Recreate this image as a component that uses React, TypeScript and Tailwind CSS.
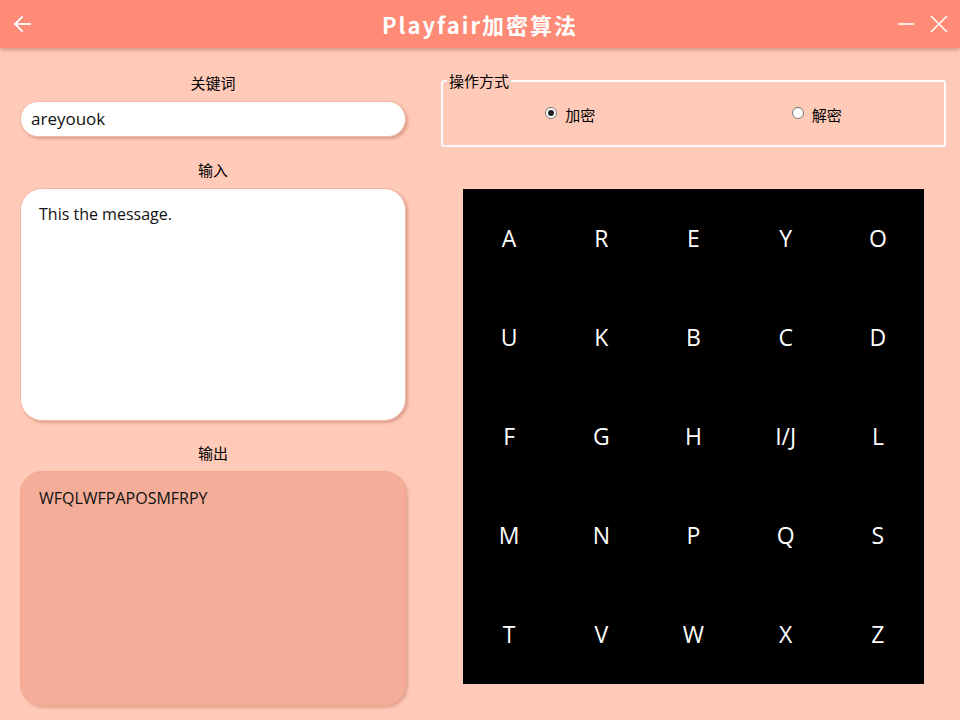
const LETTERS = [
  ["A", "R", "E", "Y", "O"],
  ["U", "K", "B", "C", "D"],
  ["F", "G", "H", "I/J", "L"],
  ["M", "N", "P", "Q", "S"],
  ["T", "V", "W", "X", "Z"],
];

const FONT = "font-['Open_Sans','Noto_Sans_CJK_SC',sans-serif]";

function TitleBar() {
  return (
    <header className="relative z-10 grid h-12 grid-cols-[1fr_auto_1fr] items-center bg-[#ff8a76] px-3 shadow-[0_2px_4px_rgba(120,60,40,0.35)]">
      <svg className="h-5 w-5" viewBox="0 0 20 20" fill="none" stroke="white" strokeWidth="1.8" strokeLinecap="square">
        <path d="M18 10H3" />
        <path d="M10 3L3 10l7 7" />
      </svg>
      <h1 className="font-['Noto_Sans_CJK_SC',sans-serif] text-[22px] font-bold tracking-[2px] text-white">
        Playfair加密算法
      </h1>
      <div className="flex items-center justify-end gap-4">
        <svg className="h-4 w-4" viewBox="0 0 16 16" stroke="white" strokeWidth="1.6">
          <path d="M0 8h16" />
        </svg>
        <svg className="h-[18px] w-[18px]" viewBox="0 0 18 18" stroke="white" strokeWidth="1.6">
          <path d="M1 1l16 16M17 1L1 17" />
        </svg>
      </div>
    </header>
  );
}

function Label({ children }: { children: string }) {
  return <p className="text-center text-[15px] leading-5 text-black">{children}</p>;
}

function Radio({ label, checked }: { label: string; checked?: boolean }) {
  return (
    <div className="flex items-center gap-2">
      <span className="mb-1 flex h-3 w-3 items-center justify-center rounded-full border border-[#777] bg-white">
        {checked && <span className="h-1.5 w-1.5 rounded-full bg-[#222]" />}
      </span>
      <span className="text-[15px] text-black">{label}</span>
    </div>
  );
}

export default function App() {
  return (
    <div className={`h-[720px] w-[960px] overflow-hidden bg-[#ffcab8] ${FONT}`}>
      <TitleBar />
      <div className="flex">
        <div className="ml-5 w-[386px] pt-[25px]">
          <Label>关键词</Label>
          <div className="mt-2 flex h-9 items-center rounded-[18px] border border-[#f5b8a6] bg-white px-[10px] text-[17px] text-[#111] shadow-[2px_2px_3px_rgba(150,80,60,0.35)]">
            areyouok
          </div>
          <div className="mt-[23px]">
            <Label>输入</Label>
          </div>
          <div className="mt-2 h-[233px] rounded-[22px] border border-[#f5b8a6] bg-white px-[18px] pt-[13px] text-[16px] text-[#111] shadow-[2px_2px_3px_rgba(150,80,60,0.35)]">
            This the message.
          </div>
          <div className="mt-[22px]">
            <Label>输出</Label>
          </div>
          <div className="mt-2 h-[235px] rounded-[22px] border border-[#f9a890] bg-[#f3ad98] px-[18px] pt-[14px] text-[16px] text-[#111] shadow-[2px_2px_3px_rgba(150,80,60,0.3)]">
            WFQLWFPAPOSMFRPY
          </div>
        </div>

        <div className="ml-[35px] w-[505px] pt-[23px]">
          <fieldset className="h-[76px] rounded-[3px] border-2 border-[#fbfbfb] px-1">
            <legend className="px-0.5 text-[15px] leading-5 text-black">操作方式</legend>
            <div className="flex pt-[13px]">
              <div className="flex flex-1 justify-center">
                <Radio label="加密" checked />
              </div>
              <div className="flex flex-1 justify-center">
                <Radio label="解密" />
              </div>
            </div>
          </fieldset>

          <div className="ml-[22px] mt-[42px] grid h-[495px] w-[461px] grid-cols-5 grid-rows-5 bg-black">
            {LETTERS.flat().map((ch) => (
              <div key={ch} className="flex items-center justify-center text-[23px] text-white">
                {ch}
              </div>
            ))}
          </div>
        </div>
      </div>
    </div>
  );
}
